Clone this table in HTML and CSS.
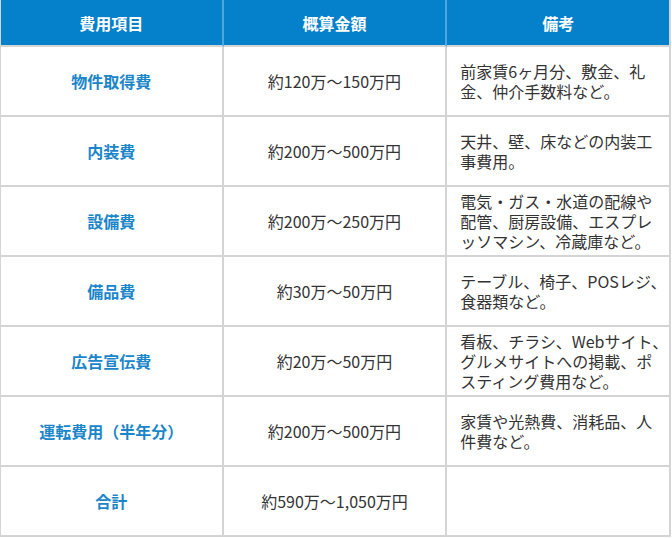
FILE: index.html
```html
<!DOCTYPE html>
<html lang="ja">
<head>
<meta charset="utf-8">
<title>費用一覧</title>
<link rel="stylesheet" href="styles.css">
</head>
<body>
<table class="cost-table">
  <thead>
    <tr>
      <th>費用項目</th>
      <th>概算金額</th>
      <th>備考</th>
    </tr>
  </thead>
  <tbody>
    <tr>
      <td class="label">物件取得費</td>
      <td class="amount">約120万～150万円</td>
      <td class="note">前家賃6ヶ月分、敷金、礼金、仲介手数料など。</td>
    </tr>
    <tr>
      <td class="label">内装費</td>
      <td class="amount">約200万～500万円</td>
      <td class="note">天井、壁、床などの内装工事費用。</td>
    </tr>
    <tr>
      <td class="label">設備費</td>
      <td class="amount">約200万～250万円</td>
      <td class="note">電気・ガス・水道の配線や配管、厨房設備、エスプレッソマシン、冷蔵庫など。</td>
    </tr>
    <tr>
      <td class="label">備品費</td>
      <td class="amount">約30万～50万円</td>
      <td class="note">テーブル、椅子、POSレジ、食器類など。</td>
    </tr>
    <tr>
      <td class="label">広告宣伝費</td>
      <td class="amount">約20万～50万円</td>
      <td class="note preset">看板、チラシ、Webサイト、
グルメサイトへの掲載、ポ
スティング費用など。</td>
    </tr>
    <tr>
      <td class="label">運転費用（半年分）</td>
      <td class="amount">約200万～500万円</td>
      <td class="note">家賃や光熱費、消耗品、人件費など。</td>
    </tr>
    <tr>
      <td class="label">合計</td>
      <td class="amount">約590万～1,050万円</td>
      <td class="note"></td>
    </tr>
  </tbody>
</table>
</body>
</html>
```

FILE: styles.css
```css
html, body {
  margin: 0;
  padding: 0;
  background: #ffffff;
}

body {
  font-family: "Noto Sans CJK JP", "Noto Sans", sans-serif;
  font-size: 16px;
  color: #333333;
}

.cost-table {
  width: 671px;
  table-layout: fixed;
  border-collapse: separate;
  border-spacing: 0;
}

.cost-table th,
.cost-table td {
  border-right: 2px solid #d4d4d4;
  border-bottom: 2px solid #d4d4d4;
  vertical-align: middle;
  box-sizing: border-box;
}

.cost-table th:first-child,
.cost-table td:first-child {
  border-left: 1px solid #d4d4d4;
}

.cost-table th {
  background: #0581cc;
  color: #ffffff;
  font-weight: 700;
  height: 47px;
  padding: 0 10px;
  text-align: center;
  line-height: 1.25;
  border-right-color: #4da6dc;
  border-left-color: #0581cc;
}

.cost-table th:last-child {
  border-right-color: #d4d4d4;
}

.cost-table td {
  height: 70px;
  padding: 0 10px;
  line-height: 1.25;
}

.label {
  color: #1a86c9;
  font-weight: 700;
  text-align: center;
}

.amount {
  text-align: center;
}

.cost-table td.note {
  text-align: left;
  padding: 0 1px 0 13px;
}

.cost-table td.preset {
  white-space: pre;
  overflow: hidden;
}
```
